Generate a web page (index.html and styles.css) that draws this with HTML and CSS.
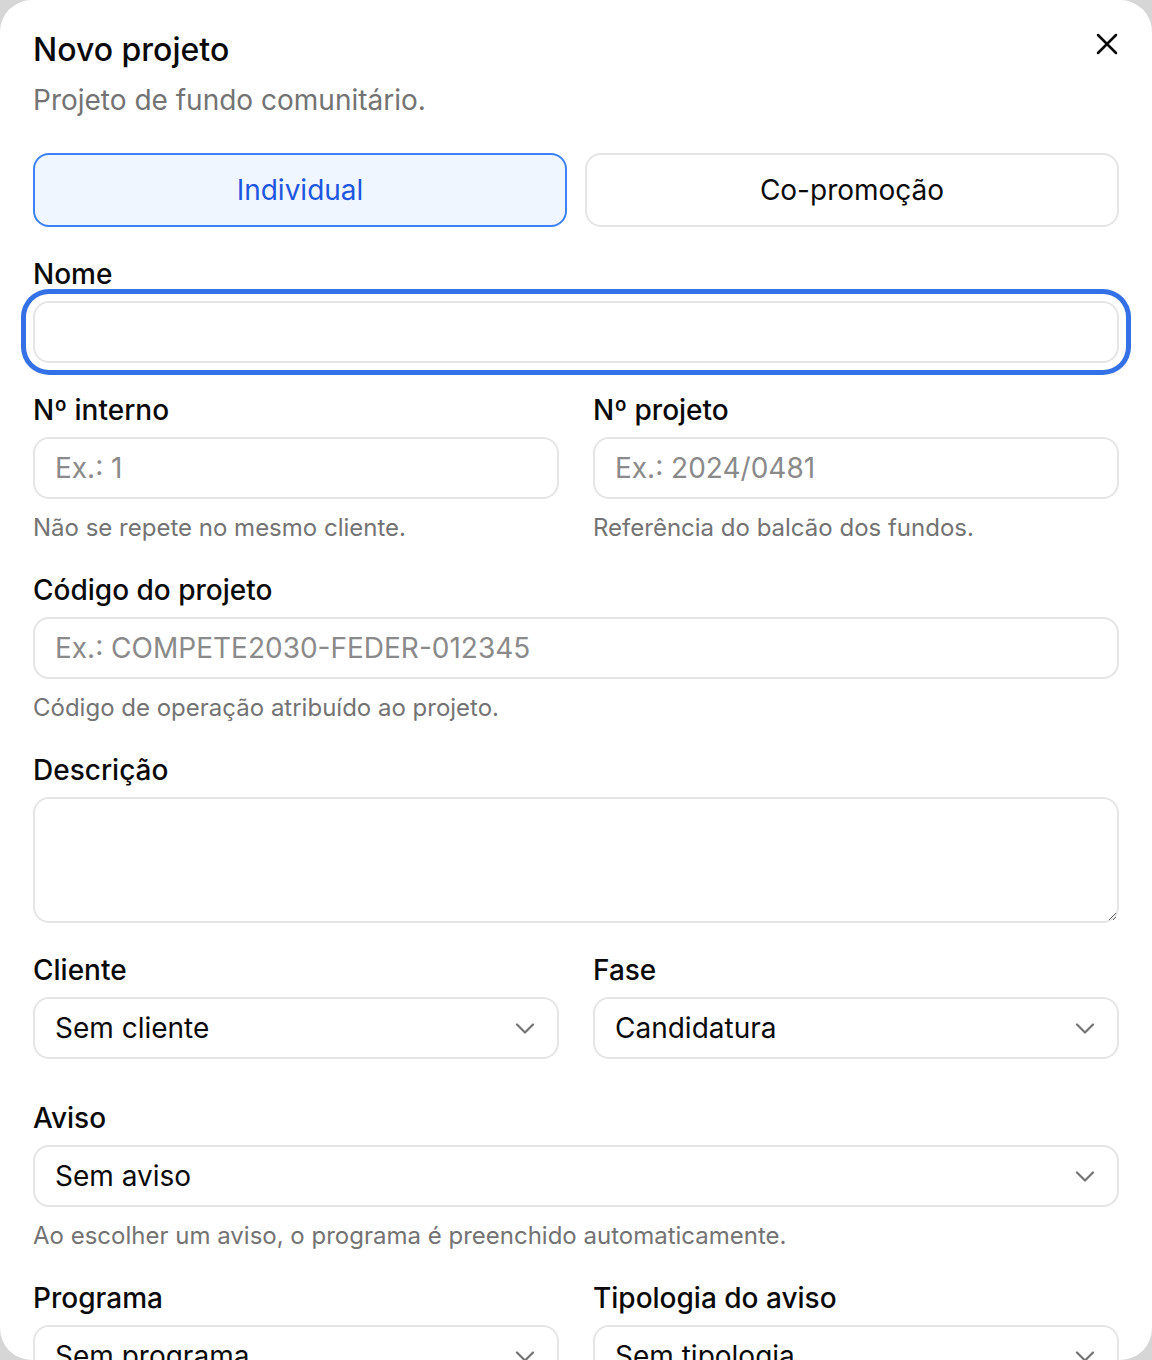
FILE: index.html
```html
<!DOCTYPE html>
<html lang="pt">
<head>
<meta charset="utf-8">
<title>Novo projeto</title>
<link rel="stylesheet" href="styles.css">
</head>
<body>
<div class="dialog" role="dialog" aria-labelledby="dlg-title">
  <button class="dialog-close" type="button" aria-label="Fechar">
    <svg viewBox="0 0 24 24" width="24" height="24"><path d="M3 3 L21 21 M21 3 L3 21"/></svg>
  </button>

  <header class="dialog-header">
    <h2 id="dlg-title" class="dialog-title">Novo projeto</h2>
    <p class="dialog-subtitle">Projeto de fundo comunitário.</p>
  </header>

  <div class="segmented">
    <button type="button" class="segment is-active">Individual</button>
    <button type="button" class="segment">Co-promoção</button>
  </div>

  <div class="form">
    <div class="field">
      <label class="label" for="f-nome">Nome</label>
      <input id="f-nome" class="control is-focused" type="text">
    </div>

    <div class="row">
      <div class="field">
        <label class="label" for="f-interno">Nº interno</label>
        <input id="f-interno" class="control" type="text" placeholder="Ex.: 1">
        <p class="hint">Não se repete no mesmo cliente.</p>
      </div>
      <div class="field">
        <label class="label" for="f-projeto">Nº projeto</label>
        <input id="f-projeto" class="control" type="text" placeholder="Ex.: 2024/0481">
        <p class="hint">Referência do balcão dos fundos.</p>
      </div>
    </div>

    <div class="field">
      <label class="label" for="f-codigo">Código do projeto</label>
      <input id="f-codigo" class="control" type="text" placeholder="Ex.: COMPETE2030-FEDER-012345">
      <p class="hint">Código de operação atribuído ao projeto.</p>
    </div>

    <div class="field">
      <label class="label" for="f-desc">Descrição</label>
      <textarea id="f-desc" class="control control-area"></textarea>
    </div>

    <div class="row row-spaced">
      <div class="field">
        <label class="label">Cliente</label>
        <div class="select">
          <span class="select-value">Sem cliente</span>
          <svg class="chevron" viewBox="0 0 20 11" width="20" height="11"><path d="M2 1.5 L10 9.5 L18 1.5"/></svg>
        </div>
      </div>
      <div class="field">
        <label class="label">Fase</label>
        <div class="select">
          <span class="select-value">Candidatura</span>
          <svg class="chevron" viewBox="0 0 20 11" width="20" height="11"><path d="M2 1.5 L10 9.5 L18 1.5"/></svg>
        </div>
      </div>
    </div>

    <div class="field">
      <label class="label">Aviso</label>
      <div class="select">
        <span class="select-value">Sem aviso</span>
        <svg class="chevron" viewBox="0 0 20 11" width="20" height="11"><path d="M2 1.5 L10 9.5 L18 1.5"/></svg>
      </div>
      <p class="hint">Ao escolher um aviso, o programa é preenchido automaticamente.</p>
    </div>

    <div class="row">
      <div class="field">
        <label class="label">Programa</label>
        <div class="select">
          <span class="select-value">Sem programa</span>
          <svg class="chevron" viewBox="0 0 20 11" width="20" height="11"><path d="M2 1.5 L10 9.5 L18 1.5"/></svg>
        </div>
      </div>
      <div class="field">
        <label class="label">Tipologia do aviso</label>
        <div class="select">
          <span class="select-value">Sem tipologia</span>
          <svg class="chevron" viewBox="0 0 20 11" width="20" height="11"><path d="M2 1.5 L10 9.5 L18 1.5"/></svg>
        </div>
      </div>
    </div>
  </div>
</div>
</body>
</html>
```

FILE: styles.css
```css
* { box-sizing: border-box; }

html, body {
  margin: 0;
  height: 100%;
}

body {
  background: #d6d6d6;
  font-family: Inter, "Noto Sans", "Liberation Sans", sans-serif;
  color: #0a0a0a;
  overflow: hidden;
}

.dialog {
  position: relative;
  height: 1360px;
  background: #fff;
  border-radius: 32px;
  padding: 30px 33px 0;
  overflow: hidden;
}

.dialog-close {
  position: absolute;
  top: 32px;
  right: 33px;
  width: 24px;
  height: 24px;
  padding: 0;
  border: 0;
  background: none;
  cursor: pointer;
}
.dialog-close svg {
  display: block;
  fill: none;
  stroke: #0a0a0a;
  stroke-width: 2.5;
  stroke-linecap: round;
}

.dialog-header { margin: 0; }

.dialog-title {
  margin: 0;
  font-size: 32px;
  line-height: 40px;
  font-weight: 500;
}

.dialog-subtitle {
  margin: 12px 0 0;
  font-size: 28px;
  line-height: 36px;
  color: #737373;
}

.segmented {
  display: grid;
  grid-template-columns: 1fr 1fr;
  gap: 18px;
  margin-top: 35px;
}

.segment {
  height: 74px;
  border: 2px solid #e5e5e5;
  border-radius: 16px;
  background: #fff;
  font: inherit;
  font-size: 28px;
  color: #0a0a0a;
  cursor: pointer;
}
.segment.is-active {
  background: #eff6ff;
  border-color: #3b82f6;
  color: #1d56e0;
}

.form {
  display: flex;
  flex-direction: column;
  gap: 30px;
  margin-top: 30px;
}

.row {
  display: grid;
  grid-template-columns: 1fr 1fr;
  gap: 34px;
}
.row-spaced { margin-bottom: 12px; }

.field {
  display: flex;
  flex-direction: column;
  min-width: 0;
}

.label {
  font-size: 28px;
  line-height: 34px;
  font-weight: 500;
  margin-bottom: 10px;
}

.control {
  display: block;
  width: 100%;
  height: 62px;
  border: 2px solid #e5e5e5;
  border-radius: 16px;
  padding: 0 20px;
  font: inherit;
  font-size: 28px;
  color: #0a0a0a;
  background: #fff;
  outline: none;
}
.control::placeholder { color: #8a8a8a; }

.control.is-focused {
  box-shadow: 0 0 0 7px #fff, 0 0 0 12px #3571e6;
}

.control-area {
  height: 126px;
  padding: 14px 20px;
  resize: vertical;
}

.select {
  display: flex;
  align-items: center;
  justify-content: space-between;
  height: 62px;
  border: 2px solid #e5e5e5;
  border-radius: 16px;
  padding: 0 22px 0 20px;
  font-size: 28px;
}

.chevron {
  flex: none;
  fill: none;
  stroke: #737373;
  stroke-width: 2.2;
  stroke-linecap: round;
  stroke-linejoin: round;
}

.hint {
  margin: 14px 0 0;
  font-size: 24px;
  line-height: 30px;
  color: #737373;
}
```
